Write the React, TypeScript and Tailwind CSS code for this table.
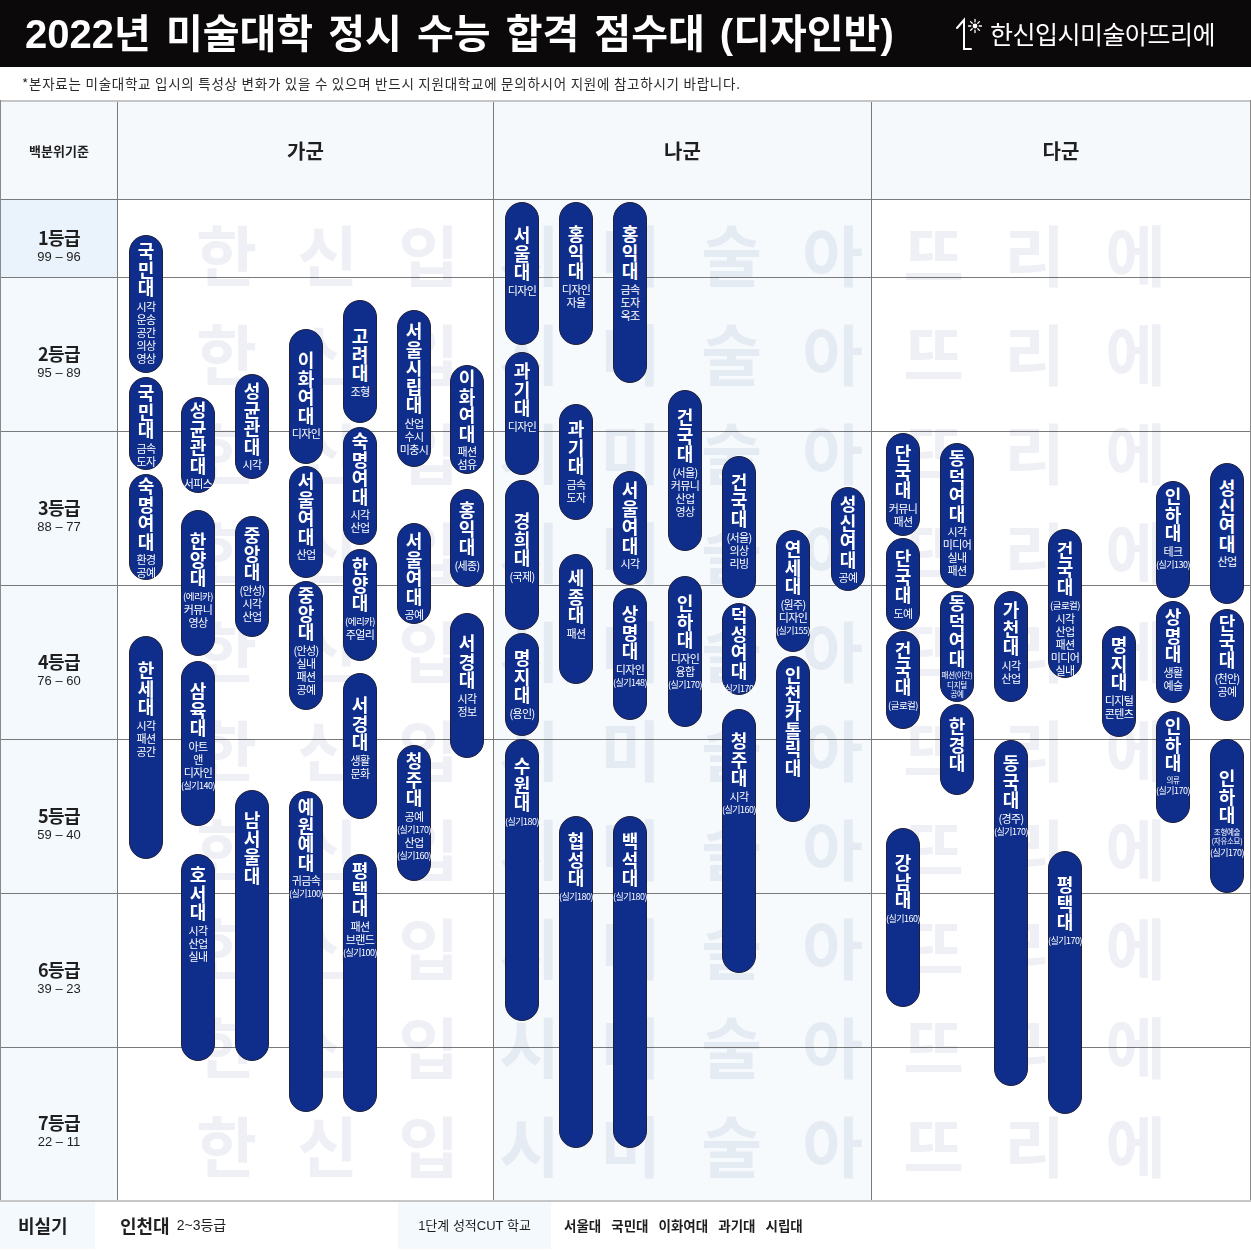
import React from "react";

// [left, top, bottom, text offset, school, sub lines]  — page pixel coordinates
type PillData = [number, number, number, number, string, string[]];

const PILLS: PillData[] = [
  // 가군
  [128, 235, 373, 8, "국민대", ["시각", "운송", "공간", "의상", "영상"]],
  [128, 377, 470, 8, "국민대", ["금속", "도자"]],
  [128, 474, 580, 4, "숙명여대", ["환경", "공예"]],
  [128, 636, 859, 26, "한세대", ["시각", "패션", "공간"]],
  [180, 397, 493, 5, "성균관대", ["서피스"]],
  [180, 510, 656, 23, "한양대", ["(에리카)", "커뮤니", "영상"]],
  [180, 661, 826, 22, "삼육대", ["아트", "앤", "디자인", "(실기140)"]],
  [180, 854, 1061, 13, "호서대", ["시각", "산업", "실내"]],
  [234, 374, 479, 9, "성균관대", ["시각"]],
  [234, 516, 637, 11, "중앙대", ["(안성)", "시각", "산업"]],
  [234, 790, 1061, 22, "남서울대", []],
  [288, 329, 464, 23, "이화여대", ["디자인"]],
  [288, 466, 578, 7, "서울여대", ["산업"]],
  [288, 581, 710, 6, "중앙대", ["(안성)", "실내", "패션", "공예"]],
  [288, 791, 1112, 8, "예원예대", ["귀금속", "(실기100)"]],
  [342, 300, 423, 28, "고려대", ["조형"]],
  [342, 427, 545, 6, "숙명여대", ["시각", "산업"]],
  [342, 549, 661, 9, "한양대", ["(에리카)", "주얼리"]],
  [342, 673, 819, 24, "서경대", ["생활", "문화"]],
  [342, 854, 1112, 9, "평택대", ["패션", "브랜드", "(실기100)"]],
  [396, 310, 467, 13, "서울시립대", ["산업", "수시", "미충시"]],
  [396, 523, 624, 10, "서울여대", ["공예"]],
  [396, 745, 881, 8, "청주대", ["공예", "(실기170)", "산업", "(실기160)"]],
  [449, 365, 474, 5, "이화여대", ["패션", "섬유"]],
  [449, 489, 587, 13, "홍익대", ["(세종)"]],
  [449, 613, 758, 22, "서경대", ["시각", "정보"]],
  // 나군
  [504, 202, 345, 25, "서울대", ["디자인"]],
  [504, 352, 475, 11, "과기대", ["디자인"]],
  [504, 480, 630, 33, "경희대", ["(국제)"]],
  [504, 633, 736, 17, "명지대", ["(용인)"]],
  [504, 739, 1021, 19, "수원대", ["(실기180)"]],
  [558, 202, 345, 24, "홍익대", ["디자인", "자율"]],
  [558, 404, 520, 17, "과기대", ["금속", "도자"]],
  [558, 554, 684, 16, "세종대", ["패션"]],
  [558, 816, 1148, 17, "협성대", ["(실기180)"]],
  [612, 202, 383, 24, "홍익대", ["금속", "도자", "옥조"]],
  [612, 471, 585, 11, "서울여대", ["시각"]],
  [612, 588, 720, 18, "상명대", ["디자인", "(실기148)"]],
  [612, 816, 1148, 17, "백석대", ["(실기180)"]],
  [667, 390, 551, 19, "건국대", ["(서울)", "커뮤니", "산업", "영상"]],
  [667, 576, 727, 19, "인하대", ["디자인", "융합", "(실기170)"]],
  [721, 456, 598, 18, "건국대", ["(서울)", "의상", "리빙"]],
  [721, 603, 695, 4, "덕성여대", ["(실기170)"]],
  [721, 709, 973, 24, "청주대", ["시각", "(실기160)"]],
  [775, 530, 652, 11, "연세대", ["(원주)", "디자인", "(실기155)"]],
  [775, 656, 822, 11, "인천카톨릭대", []],
  [830, 487, 591, 9, "성신여대", ["공예"]],
  // 다군
  [885, 433, 536, 12, "단국대", ["커뮤니", "패션"]],
  [885, 538, 630, 12, "단국대", ["도예"]],
  [885, 631, 729, 11, "건국대", ["(글로컬)"]],
  [885, 828, 1007, 27, "강남대", ["(실기160)"]],
  [939, 443, 588, 7, "동덕여대", ["시각", "미디어", "실내", "패션"]],
  [939, 591, 702, 4, "동덕여대", ["~패션(야간)", "~디지털", "~공예"]],
  [939, 704, 795, 14, "한경대", []],
  [993, 591, 702, 11, "가천대", ["시각", "산업"]],
  [993, 740, 1086, 15, "동국대", ["(경주)", "(실기170)"]],
  [1047, 529, 678, 13, "건국대", ["(글로컬)", "시각", "산업", "패션", "미디어", "실내"]],
  [1047, 851, 1114, 26, "평택대", ["(실기170)"]],
  [1101, 626, 737, 11, "명지대", ["디지털", "콘텐츠"]],
  [1155, 481, 598, 7, "인하대", ["테크", "(실기130)"]],
  [1155, 601, 703, 8, "상명대", ["생활", "예술"]],
  [1155, 711, 823, 7, "인하대", ["~의류", "(실기170)"]],
  [1209, 463, 604, 17, "성신여대", ["산업"]],
  [1209, 609, 721, 6, "단국대", ["(천안)", "공예"]],
  [1209, 739, 893, 31, "인하대", ["~조형예술", "~(자유소묘)", "(실기170)"]],
];

const ROWS = [
  { g: "1등급", r: "99 – 96", h: "h-[78px]", bg: "bg-[#eaf3fb]" },
  { g: "2등급", r: "95 – 89", h: "h-[154px]", bg: "bg-[#f4f9fd]" },
  { g: "3등급", r: "88 – 77", h: "h-[154px]", bg: "bg-[#f4f9fd]" },
  { g: "4등급", r: "76 – 60", h: "h-[154px]", bg: "bg-[#f4f9fd]" },
  { g: "5등급", r: "59 – 40", h: "h-[154px]", bg: "bg-[#f4f9fd]" },
  { g: "6등급", r: "39 – 23", h: "h-[154px]", bg: "bg-[#f4f9fd]" },
  { g: "7등급", r: "22 – 11", h: "h-[152px]", bg: "bg-[#f4f9fd]" },
];

const WATERMARK = Array.from("한신입시미술아뜨리에");
const BODY_TOP = 200;

function SubLine({ text }: { text: string }) {
  if (text.startsWith("~")) {
    return <span className="block whitespace-nowrap text-[7.5px] leading-[9.5px] tracking-[-0.04em]">{text.slice(1)}</span>;
  }
  if (text.startsWith("(실기")) {
    return <span className="block whitespace-nowrap text-[9px] leading-[13px] tracking-[-0.06em]">{text}</span>;
  }
  if (text.length >= 5) {
    return <span className="block whitespace-nowrap text-[9.5px] leading-[13px] tracking-[-0.06em]">{text}</span>;
  }
  return <span className="block whitespace-nowrap text-[11px] leading-[13px] tracking-[-0.06em]">{text}</span>;
}

function Pill({ p }: { p: PillData }) {
  const [left, top, bottom, pad, name, subs] = p;
  return (
    <div
      className="absolute flex w-[34px] flex-col items-center rounded-full border border-[#20203a] bg-[#0f2e8b] text-white"
      style={{ left, top: top - BODY_TOP, height: bottom - top, paddingTop: Math.max(pad - 3, 0) }}
    >
      {Array.from(name).map((c, i) => (
        <span key={i} className="block text-[18px] font-bold leading-[18.5px]">
          {c}
        </span>
      ))}
      {subs.length > 0 && (
        <div className="mt-[3px] flex flex-col items-center">
          {subs.map((s, i) => (
            <SubLine key={i} text={s} />
          ))}
        </div>
      )}
    </div>
  );
}

function LogoMark() {
  return (
    <svg width="30" height="36" viewBox="0 0 30 36" fill="none" stroke="white" strokeWidth="2" strokeLinecap="round">
      <path d="M3 12 L10 4 L10 33 L17 33" />
      <circle cx="21" cy="10" r="2.4" fill="white" stroke="none" />
      <path d="M21 3.5 V5.8 M21 14.2 V16.5 M14.5 10 H16.8 M25.2 10 H27.5 M16.6 5.6 L18.2 7.2 M23.8 12.8 L25.4 14.4 M25.4 5.6 L23.8 7.2 M18.2 12.8 L16.6 14.4" strokeWidth="1.3" />
    </svg>
  );
}

export default function App() {
  return (
    <div className="relative h-[1251px] w-[1251px] overflow-hidden bg-white font-['Noto_Sans_CJK_KR',sans-serif] text-[#1f1f1f]">
      {/* title bar */}
      <div className="flex h-[67px] items-center bg-[#0b0909] pl-[25px] pr-[36px] text-white">
        <h1 className="font-['Liberation_Sans','Noto_Sans_CJK_KR',sans-serif] text-[40px] font-bold [word-spacing:4px]">
          2022년 미술대학 정시 수능 합격 점수대 (디자인반)
        </h1>
        <div className="ml-auto flex items-center gap-[6px]">
          <LogoMark />
          <span className="text-[25px] leading-none tracking-[-0.02em]">한신입시미술아뜨리에</span>
        </div>
      </div>

      {/* notice */}
      <div className="flex h-[33px] items-center pl-[22px] text-[13.5px] tracking-[0.055em] text-[#2a2a2a]">
        *본자료는 미술대학교 입시의 특성상 변화가 있을 수 있으며 반드시 지원대학교에 문의하시어 지원에 참고하시기 바랍니다.
      </div>

      {/* table */}
      <div className="border-x border-[#8a8a8a]">
        <div className="grid h-[100px] grid-cols-[117px_376px_378px_1fr] border-t-2 border-b border-t-[#c6c6c6] border-b-[#7a7a7a] bg-[#f5f9fc]">
          <div className="flex items-center justify-center border-r border-[#7a7a7a] text-[13px] font-bold">백분위기준</div>
          <div className="flex items-center justify-center border-r border-[#7a7a7a] text-[20px] font-bold">가군</div>
          <div className="flex items-center justify-center border-r border-[#7a7a7a] text-[20px] font-bold">나군</div>
          <div className="flex items-center justify-center text-[20px] font-bold">다군</div>
        </div>

        <div className="relative h-[1000px]">
          <div className="flex flex-col">
            {ROWS.map((r, i) => (
              <div
                key={r.g}
                className={`grid grid-cols-[117px_376px_378px_1fr] ${r.h} ${i < ROWS.length - 1 ? "border-b border-[#7a7a7a]" : ""}`}
              >
                <div className={`flex flex-col items-center justify-center border-r border-[#7a7a7a] pt-[14px] ${r.bg}`}>
                  <span className="text-[18px] font-bold leading-[22px] tracking-[-0.03em]">{r.g}</span>
                  <span className="font-['Liberation_Sans',sans-serif] text-[13px] leading-[18px]">{r.r}</span>
                </div>
                <div className="border-r border-[#7a7a7a] bg-white" />
                <div className="border-r border-[#7a7a7a] bg-[#f6fafd]" />
                <div className="bg-white" />
              </div>
            ))}
          </div>

          {/* watermark */}
          <div className="pointer-events-none absolute left-[175px] top-[2px] grid grid-cols-[repeat(10,101px)] grid-rows-[repeat(10,99px)] mix-blend-multiply">
            {Array.from({ length: 10 }).flatMap((_, row) =>
              WATERMARK.map((c, col) => (
                <div key={`${row}-${col}`} className="flex items-center justify-center text-[66px] font-bold leading-none text-[#eef0f5]">
                  {c}
                </div>
              ))
            )}
          </div>

          {/* schools */}
          <div className="absolute inset-0">
            {PILLS.map((p, i) => (
              <Pill key={i} p={p} />
            ))}
          </div>
        </div>
      </div>

      {/* footer */}
      <div className="flex h-[49px] items-stretch border-t-2 border-[#c6c6c6]">
        <div className="flex w-[95px] items-center bg-[#f4f9fd] pl-[18px] text-[18px] font-bold">비실기</div>
        <div className="flex w-[303px] items-center gap-[7px] pl-[25px]">
          <span className="text-[18px] font-bold">인천대</span>
          <span className="font-['Liberation_Sans','Noto_Sans_CJK_KR',sans-serif] text-[14px]">2~3등급</span>
        </div>
        <div className="flex w-[153px] items-center justify-center bg-[#f4f9fd] font-['Liberation_Sans','Noto_Sans_CJK_KR',sans-serif] text-[13px]">
          1단계 성적CUT 학교
        </div>
        <div className="flex items-center gap-[10px] pl-[13px] text-[13.5px] font-bold">
          <span>서울대</span>
          <span>국민대</span>
          <span>이화여대</span>
          <span>과기대</span>
          <span>시립대</span>
        </div>
      </div>
    </div>
  );
}
